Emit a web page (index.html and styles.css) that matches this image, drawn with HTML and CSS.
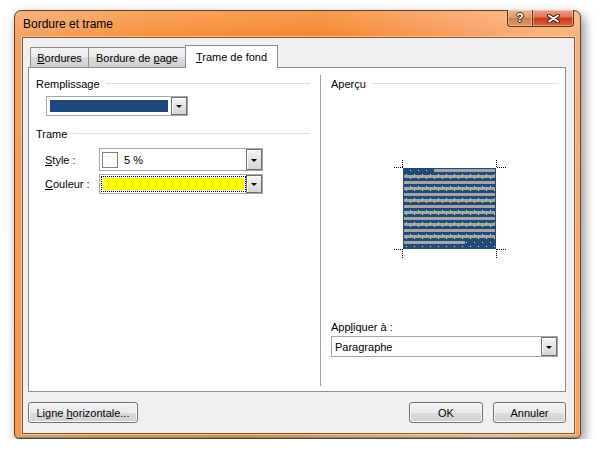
FILE: index.html
```html
<!DOCTYPE html>
<html lang="fr">
<head>
<meta charset="utf-8">
<title>Bordure et trame</title>
<link rel="stylesheet" href="styles.css">
</head>
<body>
<div class="window">
  <div class="titlebar">
    <span class="title">Bordure et trame</span>
    <div class="caption">
      <div class="cap help">?</div>
      <div class="cap close">
        <svg width="13" height="9" viewBox="0 0 13 9">
          <path d="M2 1.5 L11 7.5 M11 1.5 L2 7.5" stroke="#3a1a0c" stroke-width="3.8" stroke-linecap="round" fill="none"/>
          <path d="M2 1.5 L11 7.5 M11 1.5 L2 7.5" stroke="#ffffff" stroke-width="2" stroke-linecap="round" fill="none"/>
        </svg>
      </div>
    </div>
  </div>
  <div class="client">
    <div class="tabs">
      <div class="tab t1"><span><u>B</u>ordures</span></div>
      <div class="tab t2"><span>Bordure de <u>p</u>age</span></div>
      <div class="tab t3 active"><span><u>T</u>rame de fond</span></div>
    </div>
    <div class="panel">
      <div class="col left">
        <div class="group-head"><span>Remplissage</span><i class="rule"></i></div>
        <div class="combo fill">
          <div class="blue"></div>
          <div class="ddbtn"></div>
        </div>
        <div class="group-head trame"><span>Trame</span><i class="rule"></i></div>
        <div class="field style-row">
          <label><u>S</u>tyle :</label>
          <div class="combo stylebox">
            <svg class="swatch" width="16" height="16" viewBox="0 0 16 16" shape-rendering="crispEdges">
              <rect x="0.5" y="0.5" width="15" height="15" fill="#fff" stroke="#808080"/>
              <rect x="5" y="4" width="1" height="1" fill="#f0f000"/>
              <rect x="11" y="6" width="1" height="1" fill="#f0f000"/>
              <rect x="5" y="10" width="1" height="1" fill="#f0f000"/>
              <rect x="11" y="12" width="1" height="1" fill="#f0f000"/>
            </svg>
            <span class="val">5 %</span>
            <div class="ddbtn"></div>
          </div>
        </div>
        <div class="field color-row">
          <label><u>C</u>ouleur :</label>
          <div class="combo colorbox">
            <div class="focus"><div class="yellow"></div></div>
            <div class="ddbtn"></div>
          </div>
        </div>
      </div>
      <div class="divider"></div>
      <div class="col right">
        <div class="group-head apercu"><span>Aperçu</span><i class="rule"></i></div>
        <svg class="preview" width="112" height="98" viewBox="0 0 112 98" shape-rendering="crispEdges">
          <defs>
            <pattern id="dots" x="9" y="8" width="8" height="8" patternUnits="userSpaceOnUse">
              <rect x="7" y="2" width="1" height="1" fill="#ffff00"/>
              <rect x="3" y="6" width="1" height="1" fill="#ffff00"/>
            </pattern>
          </defs>
          <rect x="9" y="8" width="93" height="81" fill="#1f497d"/>
          <rect x="9" y="8" width="93" height="81" fill="url(#dots)"/>
          <g fill="#a6a6a6">
            <rect x="40" y="9" width="61" height="3"/>
            <rect x="10" y="15" width="91" height="3"/>
            <rect x="10" y="21" width="91" height="3"/>
            <rect x="10" y="27" width="91" height="3"/>
            <rect x="10" y="33" width="91" height="3"/>
            <rect x="10" y="39" width="91" height="3"/>
            <rect x="10" y="45" width="91" height="3"/>
            <rect x="10" y="51" width="91" height="3"/>
            <rect x="10" y="57" width="91" height="3"/>
            <rect x="10" y="63" width="91" height="3"/>
            <rect x="10" y="69" width="91" height="3"/>
            <rect x="10" y="75" width="91" height="3"/>
            <rect x="10" y="81" width="61" height="3"/>
          </g>
          <g stroke="#000" stroke-width="1" stroke-dasharray="1 1" fill="none">
            <path d="M0 7.5 H9"/>
            <path d="M8.5 0 V8"/>
            <path d="M103 7.5 H112"/>
            <path d="M102.5 0 V8"/>
            <path d="M0 89.5 H9"/>
            <path d="M8.5 89 V98"/>
            <path d="M103 89.5 H112"/>
            <path d="M102.5 89 V98"/>
          </g>
        </svg>
        <div class="apply-label">App<u>l</u>iquer à :</div>
        <div class="combo apply">
          <span class="val">Paragraphe</span>
          <div class="ddbtn"></div>
        </div>
      </div>
    </div>
    <div class="buttons">
      <button class="btn ligne">Ligne <u>h</u>orizontale...</button>
      <button class="btn ok">OK</button>
      <button class="btn cancel">Annuler</button>
    </div>
  </div>
</div>
</body>
</html>
```

FILE: styles.css
```css
* {
  box-sizing: border-box;
}

body {
  margin: 0;
  background: #ffffff;
  font-family: "Liberation Sans", Arial, sans-serif;
  font-size: 11px;
  color: #000;
}

u {
  text-decoration: underline;
  text-underline-offset: 1px;
}

.window {
  margin: 10px 0 0 14px;
  width: 567px;
  height: 429px;
  border: 1px solid #6a3c1c;
  border-radius: 7px 7px 5px 5px;
  padding: 0 5px 4px 7px;
  display: flex;
  flex-direction: column;
  background:
    linear-gradient(to bottom, rgba(255, 255, 255, 0.18), rgba(255, 255, 255, 0) 26px),
    linear-gradient(100deg, #f4a465 0%, #f6913c 22%, #f5862c 48%, #f9a264 72%, #fbb27c 88%, #f7a05a 100%);
  box-shadow: 3px 5px 12px rgba(0, 0, 0, 0.45), inset 0 -1px 0 #3fa8c8, inset -1px 0 0 #f0c090;
}

.titlebar {
  height: 26px;
  display: flex;
  align-items: flex-start;
  padding: 0 1px 0 1px;
}

.title {
  font-size: 12px;
  line-height: 16px;
  margin-top: 5px;
  color: #000;
}

.caption {
  margin-left: auto;
  display: flex;
  margin-top: -1px;
  height: 17px;
}

.cap {
  height: 17px;
  border: 1px solid #5a3420;
  border-top: none;
  display: flex;
  align-items: center;
  justify-content: center;
  box-shadow: inset 0 0 0 1px rgba(255, 230, 210, 0.45);
}

.help {
  width: 25px;
  border-radius: 0 0 0 4px;
  border-right: none;
  background: linear-gradient(#f2b48c, #dc9a6c 48%, #c8804e 52%, #d89a70);
  color: #fff;
  font-weight: bold;
  font-size: 12px;
  text-shadow: 1px 0 0 #3a2010, -1px 0 0 #3a2010, 0 1px 0 #3a2010, 0 -1px 0 #3a2010;
}

.close {
  width: 42px;
  border-radius: 0 0 4px 0;
  background: linear-gradient(#eea088, #e07050 45%, #c83a1c 52%, #d8603e);
}

.client {
  height: 397px;
  background: #f0f0f0;
  border: 1px solid #8c5430;
  box-shadow: 0 0 0 1px rgba(255, 225, 195, 0.55);
  padding: 7px 8px 0 5px;
  display: flex;
  flex-direction: column;
}

.tabs {
  height: 22px;
  display: flex;
  align-items: flex-end;
  padding-left: 2px;
}

.tab {
  height: 20px;
  border: 1px solid #8e8f8f;
  border-bottom: none;
  background: linear-gradient(#f3f3f3, #ebebeb 50%, #dddddd 50%, #cfcfcf);
  display: flex;
  align-items: center;
  justify-content: center;
  padding-top: 1px;
  white-space: nowrap;
}

.t1 {
  width: 59px;
}

.t2 {
  width: 98px;
  margin-left: -1px;
}

.t3 {
  width: 93px;
  margin-left: -1px;
}

.tab.active {
  height: 23px;
  margin-bottom: -1px;
  background: #ffffff;
  border-color: #898c95;
  position: relative;
  z-index: 1;
  padding-top: 0;
}

.panel {
  height: 325px;
  background: #ffffff;
  border: 1px solid #898c95;
  display: flex;
}

.col {
  display: flex;
  flex-direction: column;
}

.left {
  width: 291px;
}

.right {
  width: 244px;
}

.divider {
  width: 1px;
  margin-top: 7px;
  height: 311px;
  background: #a0a0a0;
}

.group-head {
  display: flex;
  align-items: center;
  height: 14px;
  line-height: 14px;
  margin-top: 9px;
  padding-left: 7px;
  padding-right: 10px;
  gap: 6px;
}

.group-head .rule {
  flex: 1;
  height: 1px;
  background: #d5dfe5;
  margin-top: -1px;
}

.group-head.trame {
  margin-top: 11px;
}

.group-head.apercu {
  padding-left: 10px;
  padding-right: 6px;
}

.combo {
  background: #fff;
  border: 1px solid #a3a7ad;
  display: flex;
  align-items: center;
}

.ddbtn {
  margin-left: auto;
  width: 16px;
  align-self: stretch;
  border: 1px solid #6f6f6f;
  background: linear-gradient(#f6f6f6, #e4e4e4 50%, #d4d4d4);
  box-shadow: inset 1px 1px 0 #ffffff;
  display: flex;
  align-items: center;
  justify-content: center;
}

.ddbtn::after {
  content: "";
  width: 0;
  height: 0;
  border-left: 3px solid transparent;
  border-right: 3px solid transparent;
  border-top: 3px solid #000;
  margin-top: 1px;
}

.fill {
  margin-top: 5px;
  margin-left: 17px;
  width: 142px;
  height: 20px;
}

.blue {
  width: 118px;
  height: 12px;
  margin-left: 3px;
  background: #1f497d;
}

.field {
  display: flex;
  align-items: center;
  padding-left: 16px;
}

.field label {
  width: 54px;
}

.style-row {
  margin-top: 7px;
}

.stylebox {
  width: 164px;
  height: 23px;
}

.swatch {
  margin-left: 2px;
  display: block;
}

.val {
  margin-left: 6px;
}

.color-row {
  margin-top: 3px;
}

.colorbox {
  width: 164px;
  height: 20px;
}

.focus {
  margin-left: 1px;
  width: 145px;
  height: 16px;
  border: 1px dotted #000;
  padding: 1px;
}

.yellow {
  width: 100%;
  height: 100%;
  background: #ffff00;
}

.preview {
  display: block;
  margin-top: 69px;
  margin-left: 73px;
}

.apply-label {
  margin-top: 62px;
  padding-left: 10px;
  line-height: 14px;
}

.apply {
  margin-top: 2px;
  margin-left: 10px;
  width: 227px;
  height: 21px;
}

.apply .val {
  margin-left: 3px;
}

.buttons {
  margin-top: 10px;
  display: flex;
  gap: 10px;
}

.btn {
  height: 21px;
  padding: 0;
  font-family: inherit;
  font-size: 11px;
  color: #000;
  border: 1px solid #707070;
  border-radius: 3px;
  background: linear-gradient(#f2f2f2, #ebebeb 50%, #dddddd 50%, #cfcfcf);
  box-shadow: inset 0 0 0 1px #fbfbfb;
}

.ligne {
  width: 110px;
}

.ok {
  width: 74px;
  margin-left: auto;
}

.cancel {
  width: 73px;
}
```
